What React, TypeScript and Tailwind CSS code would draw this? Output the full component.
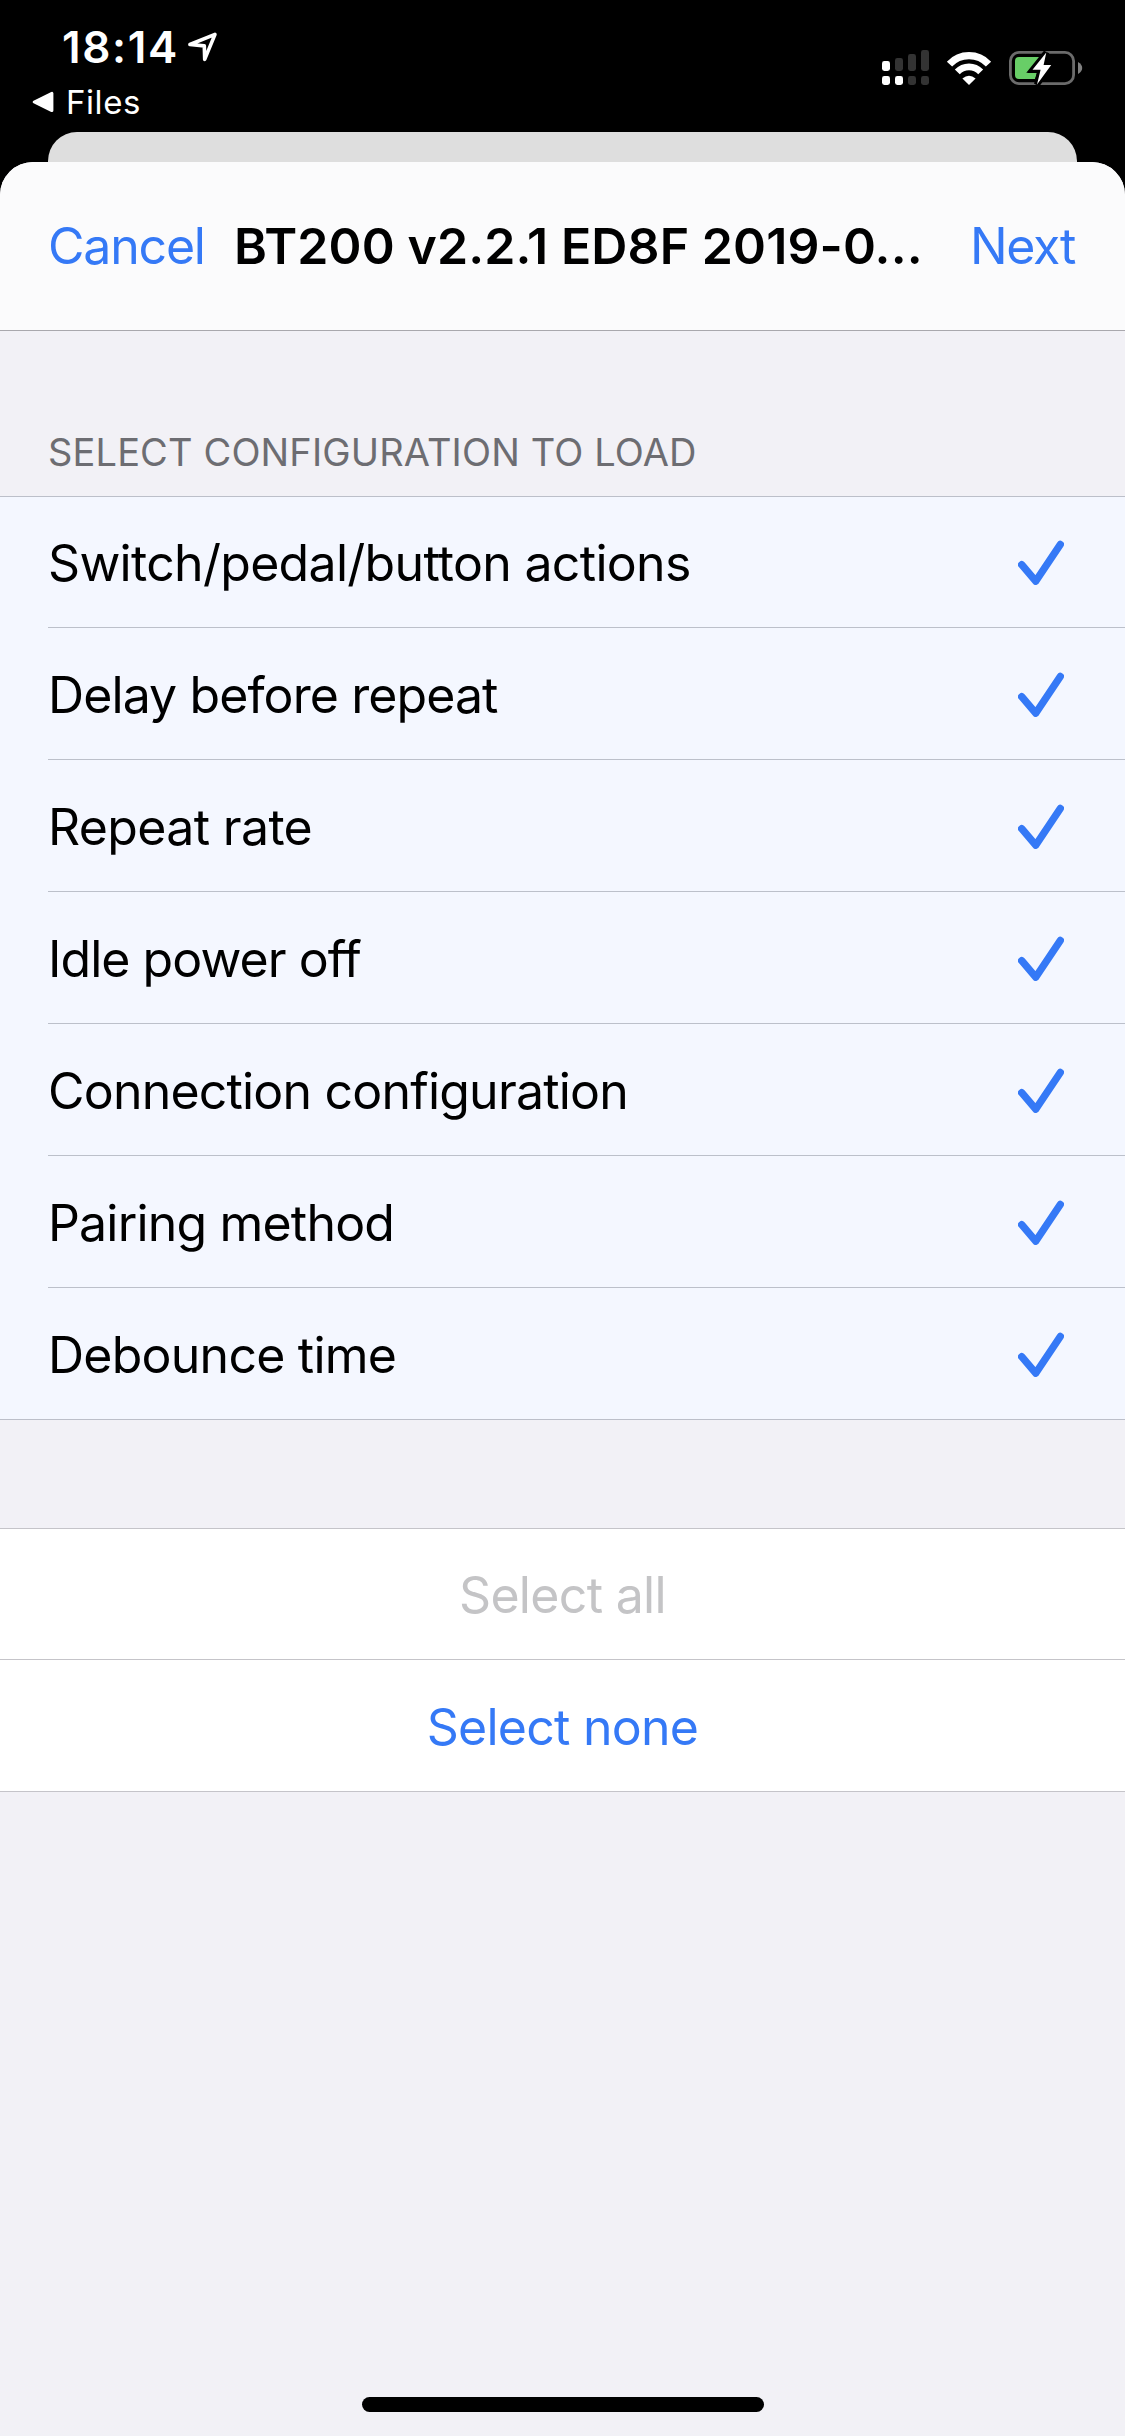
const OPTIONS: { label: string; spacing: string }[] = [
  { label: 'Switch/pedal/button actions', spacing: 'tracking-[-0.7px]' },
  { label: 'Delay before repeat', spacing: 'tracking-[-0.9px]' },
  { label: 'Repeat rate', spacing: 'tracking-[-0.65px]' },
  { label: 'Idle power off', spacing: 'tracking-[-0.95px]' },
  { label: 'Connection configuration', spacing: 'tracking-[-0.8px]' },
  { label: 'Pairing method', spacing: 'tracking-[-0.82px]' },
  { label: 'Debounce time', spacing: 'tracking-[-0.76px]' },
];

function LocationIcon() {
  return (
    <svg className="mt-[10px] ml-[8px] h-8 w-8" viewBox="188 30 32 32" fill="none">
      <path
        d="M216 34.4 L190.9 44.5 L205.3 45.9 L205.7 59.4 Z"
        stroke="#fff"
        strokeWidth="3.6"
        strokeLinejoin="round"
      />
    </svg>
  );
}

function BackTriangle() {
  return (
    <svg className="h-[22px] w-[22px]" viewBox="32 91.5 22 22">
      <path
        d="M34.2 102.5 L51.9 93.9 V111.1 Z"
        fill="#fff"
        stroke="#fff"
        strokeWidth="3"
        strokeLinejoin="round"
      />
    </svg>
  );
}

function SignalIcon() {
  return (
    <svg className="h-[36px] w-[48px]" viewBox="882 50 48 36">
      <g fill="#fff">
        <rect x="882" y="61" width="8" height="10" rx="2.4" />
        <rect x="882" y="76" width="8" height="9" rx="2.4" />
        <rect x="895" y="76" width="8" height="9" rx="2.4" />
      </g>
      <g fill="#333">
        <rect x="895" y="58" width="8" height="13" rx="2.4" />
        <rect x="908" y="54" width="8" height="17" rx="2.4" />
        <rect x="921" y="50" width="8" height="21" rx="2.4" />
        <rect x="908" y="76" width="8" height="9" rx="2.4" />
        <rect x="921" y="76" width="8" height="9" rx="2.4" />
      </g>
    </svg>
  );
}

function WifiIcon() {
  return (
    <svg className="ml-4 h-[36px] w-[46px]" viewBox="946 50 46 36" fill="none">
      <path d="M949.5 64.1 A26.7 26.7 0 0 1 988.5 64.1" stroke="#fff" strokeWidth="7.2" />
      <path d="M957.3 71.9 A16.2 16.2 0 0 1 980.7 71.9" stroke="#fff" strokeWidth="6.8" />
      <path d="M969 85 L962.4 78.4 Q969 73.2 975.6 78.4 Z" fill="#fff" />
    </svg>
  );
}

function BatteryIcon() {
  return (
    <svg className="ml-[16px] h-[36px] w-[75px]" viewBox="1008 51 75 36" fill="none">
      <rect x="1010.4" y="53.4" width="63.2" height="31.2" rx="8.6" stroke="#6b6b6b" strokeWidth="2.8" />
      <path d="M1078 63 Q1082.2 65.5 1082.2 69 Q1082.2 72.5 1078 75 Z" fill="#808080" />
      <path d="M1019 58 H1041 L1027.3 74 H1037 L1035 80 H1019 Q1015 80 1015 76 V62 Q1015 58 1019 58 Z" fill="#68ce67" />
      <path
        d="M1046.3 53.5 L1032.5 70.8 H1040.6 L1037 85.4 L1051.2 66 H1043.6 Z"
        fill="#000"
        stroke="#000"
        strokeWidth="6"
      />
      <path d="M1046.3 53.5 L1032.5 70.8 H1040.6 L1037 85.4 L1051.2 66 H1043.6 Z" fill="#fff" />
    </svg>
  );
}

function CheckIcon() {
  return (
    <svg className="mr-[61px] mb-[42px] h-[46px] w-[46px]" viewBox="1018 539 46 46" fill="none">
      <path
        d="M1021.7 564.7 L1035.7 581.2 L1060.3 544.5"
        stroke="#3579f6"
        strokeWidth="7.4"
        strokeLinecap="round"
        strokeLinejoin="round"
      />
    </svg>
  );
}

function StatusBar() {
  return (
    <div className="flex h-[132px] shrink-0 justify-between text-white">
      <div className="flex flex-col pt-5">
        <div className="flex h-[54px] pl-[62px]">
          <span className="text-[44px] leading-[54px] font-semibold tracking-[1.65px]">18:14</span>
          <LocationIcon />
        </div>
        <div className="mt-2 flex h-10 items-center pl-8">
          <BackTriangle />
          <span className="ml-[12px] text-[33px] leading-10 tracking-[0.57px]">Files</span>
        </div>
      </div>
      <div className="flex items-start pt-[50px] pr-[42px]">
        <SignalIcon />
        <WifiIcon />
        <BatteryIcon />
      </div>
    </div>
  );
}

export default function App() {
  return (
    <div className="flex h-[2436px] w-[1125px] flex-col overflow-hidden bg-black font-['Inter',sans-serif] whitespace-nowrap">
      <StatusBar />
      <div className="mx-12 h-[30px] shrink-0 rounded-t-[29px] bg-[#dedede]" />
      <div className="flex flex-1 flex-col overflow-hidden rounded-t-[33px] bg-[#f2f1f6]">
        <header className="flex h-[169px] shrink-0 items-end border-b border-[#a9a8ad] bg-[#fbfbfc] pb-[54px] text-[50px] leading-[60px]">
          <button className="ml-[48px] w-[186px] text-left tracking-[-1.2px] text-[#3579f6]">Cancel</button>
          <h1 className="w-[736px] font-semibold tracking-[0.1px] text-black">BT200 v2.2.1 ED8F 2019-0...</h1>
          <button className="tracking-[-1.3px] text-[#3579f6]">Next</button>
        </header>

        <h2 className="flex h-[165px] shrink-0 items-end pb-[21px] pl-12 text-[38px] leading-[46px] tracking-[0.14px] text-[#6d6d72]">
          SELECT CONFIGURATION TO LOAD
        </h2>

        <ul className="shrink-0 border-y border-[#bcbfc9] bg-[#f4f7ff] pl-12">
          {OPTIONS.map(({ label, spacing }, i) => (
            <li
              key={label}
              className={`flex items-end justify-between border-[#bcc0ca] text-[50px] leading-[60px] text-black ${
                i === 0 ? 'h-[131px] border-b' : i === OPTIONS.length - 1 ? 'h-[131px]' : 'h-[132px] border-b'
              }`}
            >
              <span className={`pb-[34px] ${spacing}`}>{label}</span>
              <CheckIcon />
            </li>
          ))}
        </ul>

        <div className="mt-[108px] flex shrink-0 flex-col border-y border-[#c5c4c9] bg-white text-[50px] leading-[60px]">
          <button className="flex h-[131px] items-end justify-center border-b border-[#c5c4c9] pb-[34px] tracking-[-0.68px] text-[#c4c4c6]">
            Select all
          </button>
          <button className="flex h-[131px] items-end justify-center pb-[34px] tracking-[-0.75px] text-[#3579f6]">
            Select none
          </button>
        </div>

        <div className="mt-auto mb-6 h-[15px] w-[402px] shrink-0 self-center rounded-full bg-black" />
      </div>
    </div>
  );
}
